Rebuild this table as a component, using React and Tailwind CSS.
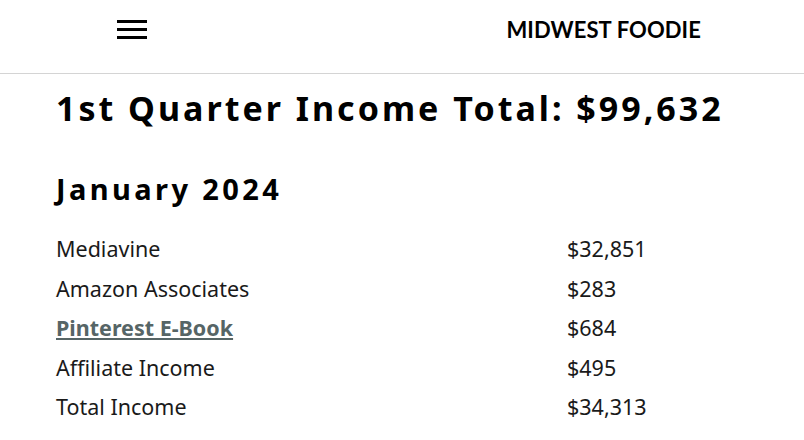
const rows = [
  { label: "Mediavine", amount: "$32,851" },
  { label: "Amazon Associates", amount: "$283" },
  { label: "Pinterest E-Book", amount: "$684", link: true },
  { label: "Affiliate Income", amount: "$495" },
  { label: "Total Income", amount: "$34,313" },
]

export default function App() {
  return (
    <div className="min-h-screen w-[804px] bg-white text-black">
      {/* Header */}
      <header className="h-[74px] border-b border-[#d4d4d4] flex items-center">
        <button className="ml-[117px] flex flex-col gap-[5px] mt-[-14px]">
          <span className="block w-[30px] h-[3px] bg-black"></span>
          <span className="block w-[30px] h-[3px] bg-black"></span>
          <span className="block w-[30px] h-[3px] bg-black"></span>
        </button>
        <div className="ml-auto mr-[103px] mt-[-15px] font-['Lato','Liberation_Sans',sans-serif] font-bold text-[22px] tracking-[0.1px]">
          MIDWEST FOODIE
        </div>
      </header>

      {/* Content */}
      <main className="px-[56px] font-['Noto_Sans','Open_Sans',sans-serif]">
        <h1 className="mt-[12px] text-[34px] leading-[44px] font-bold tracking-[3px]">
          1st Quarter Income Total: $99,632
        </h1>
        <h2 className="mt-[40px] text-[29px] leading-[38px] font-bold tracking-[3.4px]">
          January 2024
        </h2>
        <div className="mt-[21px] grid grid-cols-[511px_1fr] text-[21.5px] leading-[39.5px] text-[#1a1a1a]">
          {rows.map((r) => (
            <div key={r.label} className="contents">
              <div>
                {r.link ? (
                  <a href="#" className="font-bold underline text-[#566566]">
                    {r.label}
                  </a>
                ) : (
                  r.label
                )}
              </div>
              <div>{r.amount}</div>
            </div>
          ))}
        </div>
      </main>
    </div>
  )
}
